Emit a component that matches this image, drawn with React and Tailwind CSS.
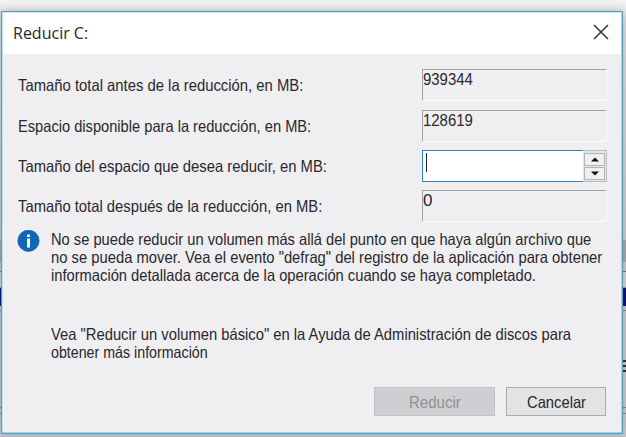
import { useLayoutEffect, useRef, useState } from 'react';

// One line of condensed dialog text, scaled horizontally to the given width.
function Line({ width, children, className = '' }) {
  const ref = useRef(null);
  const [scale, setScale] = useState(1);
  useLayoutEffect(() => {
    if (ref.current) setScale(width / ref.current.offsetWidth);
  }, [width]);
  return (
    <div className={`h-[18px] whitespace-nowrap leading-[18px] ${className}`} style={{ width }}>
      <span ref={ref} className="inline-block origin-left" style={{ transform: `scaleX(${scale})` }}>
        {children}
      </span>
    </div>
  );
}

function Row({ label, width, children, className = '' }) {
  return (
    <div className={`flex h-8 justify-between ${className}`}>
      <Line width={width} className="mt-[7px]">{label}</Line>
      {children}
    </div>
  );
}

function ReadOnly({ value, width }) {
  return (
    <div className="h-8 w-[185px] border border-t-[#a3a2a5] border-r-[#fbfafc] border-b-[#fbfafc] border-l-[#a3a2a5] bg-[#efeef1] pt-px">
      <Line width={width} className="text-[17px]">{value}</Line>
    </div>
  );
}

function SpinButton({ down }) {
  return (
    <div className="flex h-[13px] w-[21px] items-center justify-center border border-[#b4b4b6] bg-[#f0f0f1]">
      <svg width="8" height="5" viewBox="0 0 8 5">
        <path d={down ? 'M0 .5h8L4 4.5z' : 'M0 4.5h8L4 .5z'} fill="#111" />
      </svg>
    </div>
  );
}

export default function App() {
  return (
    <div className="relative h-[437px] w-[626px] overflow-hidden bg-[#f1f1f1] font-['Liberation_Sans',Arial,sans-serif] text-[16.5px] text-[#29282d]">
      <div className="flex h-full flex-col">
        <div className="h-[240px] bg-linear-to-b from-[#f3f3f3] via-[#dcdce0] via-10% to-[#c9c9ce]" />
        <div className="h-[22px] bg-[#a9a9ad]" />
        <div className="h-[10px] border-b border-[#77777c] bg-[#c9c9ce]" />
        <div className="h-4 border-b border-[#99999e] bg-[#d2d2d6]" />
        <div className="h-[18px] bg-[#14147c]" />
        <div className="h-[5px] border-b border-[#88888c] bg-[#c7c7cd]" />
        <div className="flex h-[97px] justify-end border-b border-[#88888c] bg-[#c7c7cd]">
          <div className="mt-[49px] flex w-[3px] flex-col gap-[3px]">
            <div className="h-[2px] bg-[#333]" />
            <div className="h-[2px] bg-[#333]" />
            <div className="h-[2px] bg-[#333]" />
          </div>
        </div>
        <div className="h-[6px] border-b border-[#88888c] bg-[#c7c7cd]" />
        <div className="flex-1 bg-[#c9c9cc]" />
      </div>
      <div className="absolute top-[11px] left-px flex h-[423px] w-[622px] flex-col border border-[#5a9fb9] bg-[#efeef1] shadow-[0_0_8px_rgba(0,0,0,0.22)]">
        <div className="flex h-full flex-col border border-[#8fdcf4] border-t-[#c4ecf8] border-l-[#b4e6f4]">
          <div className="flex h-[41px] shrink-0 items-start justify-between bg-white pr-[12px] pl-[10px]">
            <Line width={75} className="mt-[11px] font-['Open_Sans',sans-serif] text-[16px]">Reducir C:</Line>
            <svg className="mt-[11px]" width="16" height="16" viewBox="0 0 16 16" fill="none" stroke="#333" strokeWidth="1.5">
              <path d="M1 1l14 14M15 1L1 15" />
            </svg>
          </div>
          <div className="flex flex-col pt-[15px] pr-[14px] pl-[15px]">
            <Row label="Tamaño total antes de la reducción, en MB:" width={285}>
              <ReadOnly value="939344" width={50} />
            </Row>
            <Row label="Espacio disponible para la reducción, en MB:" width={293} className="mt-[9px]">
              <ReadOnly value="128619" width={50} />
            </Row>
            <Row label="Tamaño del espacio que desea reducir, en MB:" width={309} className="mt-2">
              <div className="flex h-8 w-[185px]">
                <div className="w-[161px] border border-r-0 border-[#2f86c2] bg-white pt-[2px] pl-[3px]">
                  <div className="h-[19px] w-px bg-[#222]" />
                </div>
                <div className="flex w-6 flex-col justify-center gap-px border border-l-0 border-[#bababc] bg-[#e6e6e8] pl-[1px]">
                  <SpinButton />
                  <SpinButton down />
                </div>
              </div>
            </Row>
            <Row label="Tamaño total después de la reducción, en MB:" width={304} className="mt-2">
              <ReadOnly value="0" width={9} />
            </Row>
          </div>
          <div className="mt-2 flex gap-[11px] pl-[14px]">
            <svg width="23" height="23" viewBox="0 0 23 23">
              <circle cx="11.5" cy="10.8" r="10.6" fill="#0b68bb" stroke="#2b5f94" strokeWidth=".8" />
              <path d="M10 4.4h3v2.6h-3zM10 8.6h3v8.8h-3z" fill="#fff" />
            </svg>
            <div>
              <Line width={540}>No se puede reducir un volumen más allá del punto en que haya algún archivo que</Line>
              <Line width={551}>no se pueda mover. Vea el evento "defrag" del registro de la aplicación para obtener</Line>
              <Line width={485}>información detallada acerca de la operación cuando se haya completado.</Line>
              <Line width={520} className="mt-[41px]">Vea "Reducir un volumen básico" en la Ayuda de Administración de discos para</Line>
              <Line width={157}>obtener más información</Line>
            </div>
          </div>
          <div className="mt-auto mr-[15px] mb-4 flex justify-end gap-[11px]">
            <button className="flex h-[29px] w-[121px] items-center justify-center border border-[#bcc5cc] bg-[#cfced0] text-[#929194]">
              <Line width={52}>Reducir</Line>
            </button>
            <button className="flex h-[29px] w-[100px] items-center justify-center border border-[#a9acaf] bg-[#e3e2e4]">
              <Line width={59}>Cancelar</Line>
            </button>
          </div>
        </div>
      </div>
    </div>
  );
}
